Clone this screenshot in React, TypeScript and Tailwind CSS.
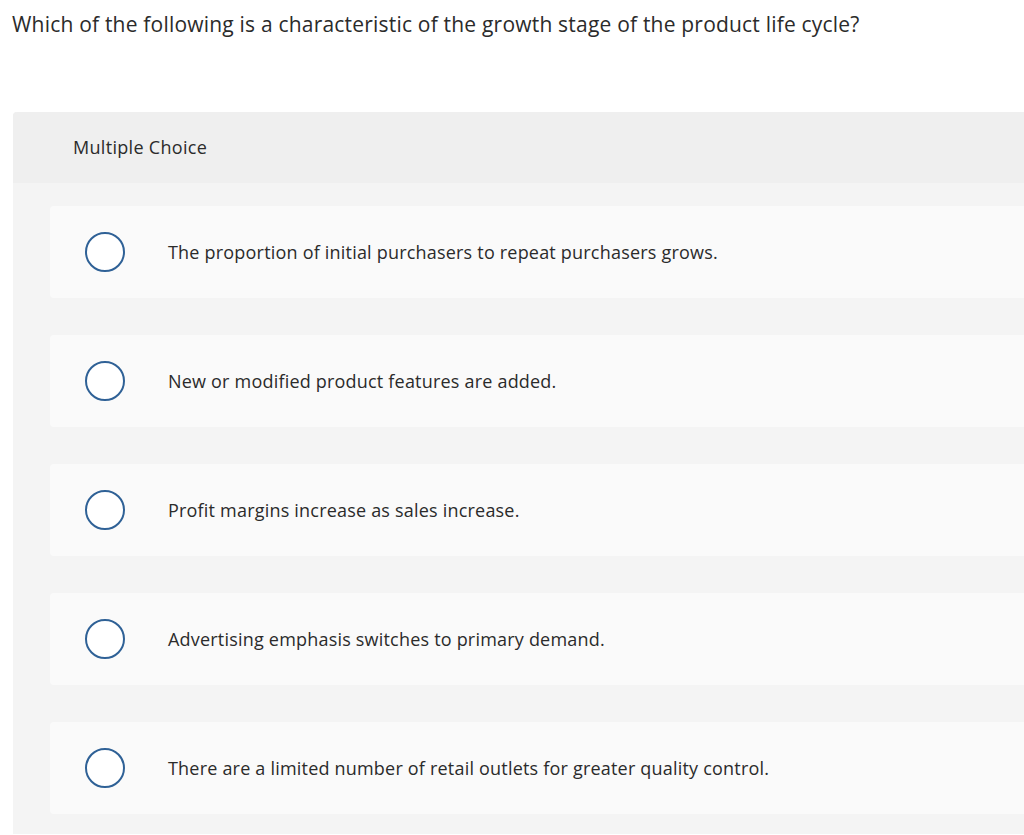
const OPTIONS = [
  "The proportion of initial purchasers to repeat purchasers grows.",
  "New or modified product features are added.",
  "Profit margins increase as sales increase.",
  "Advertising emphasis switches to primary demand.",
  "There are a limited number of retail outlets for greater quality control.",
];

export default function App() {
  return (
    <div className="min-h-[835px] bg-white text-[#2b2b2b] font-['Open_Sans',sans-serif] overflow-hidden">
      <p className="pl-3 pt-[9px] text-[21px] leading-[30px] tracking-[0.2px]">
        Which of the following is a characteristic of the growth stage of the product life cycle?
      </p>

      <div className="ml-[13px] mt-[73px] bg-[#f4f4f4] rounded-tl-[4px] pb-[20px]">
        {/* Header */}
        <div className="h-[71px] bg-[#efefef] rounded-tl-[4px] flex items-center pl-[60px] text-[18px] tracking-[0.3px]">
          Multiple Choice
        </div>

        {/* Options */}
        <div className="flex flex-col gap-[37px] pt-[23px] pl-[37px]">
          {OPTIONS.map((text, i) => (
            <label
              key={i}
              className="h-[92px] bg-[#fafafa] rounded-l-[4px] flex items-center"
            >
              <span className="ml-[35px] w-[40px] h-[40px] rounded-full border-2 border-[#2f6196] bg-white shrink-0" />
              <span className="ml-[43px] text-[18px] tracking-[0.2px]">{text}</span>
            </label>
          ))}
        </div>
      </div>
    </div>
  );
}
